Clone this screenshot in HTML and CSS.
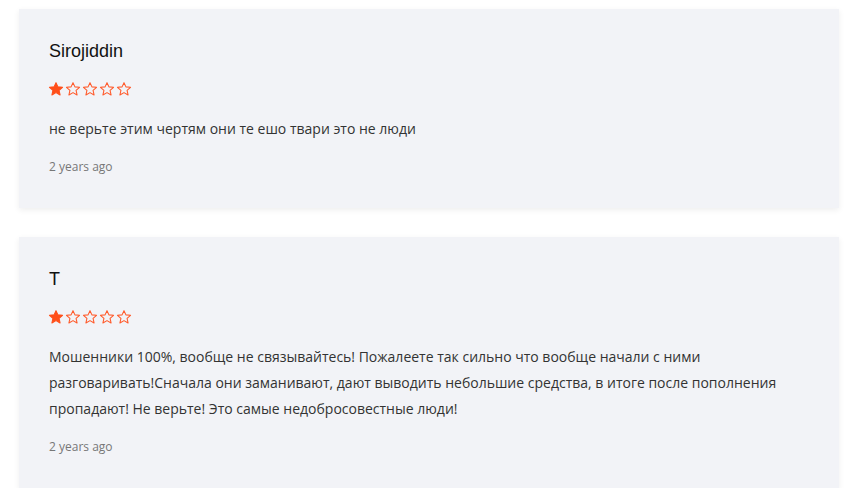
FILE: index.html
```html
<!DOCTYPE html>
<html>
<head>
    <meta charset="UTF-8">
    <meta name="viewport" content="width=device-width, initial-scale=1.0">
    <title>Reviews</title>
    <link rel="stylesheet" href="styles.css">
</head>
<body>
    <div class="reviews">
        <div class="review">
            <h3 class="review-name">Sirojiddin</h3>
            <div class="stars">
                <svg class="star filled" viewBox="0 0 24 24"><path d="M12 2.5l2.9 6.3 6.9.7-5.2 4.6 1.5 6.8L12 17.4l-6.1 3.5 1.5-6.8-5.2-4.6 6.9-.7z"/></svg>
                <svg class="star" viewBox="0 0 24 24"><path d="M12 2.5l2.9 6.3 6.9.7-5.2 4.6 1.5 6.8L12 17.4l-6.1 3.5 1.5-6.8-5.2-4.6 6.9-.7z"/></svg>
                <svg class="star" viewBox="0 0 24 24"><path d="M12 2.5l2.9 6.3 6.9.7-5.2 4.6 1.5 6.8L12 17.4l-6.1 3.5 1.5-6.8-5.2-4.6 6.9-.7z"/></svg>
                <svg class="star" viewBox="0 0 24 24"><path d="M12 2.5l2.9 6.3 6.9.7-5.2 4.6 1.5 6.8L12 17.4l-6.1 3.5 1.5-6.8-5.2-4.6 6.9-.7z"/></svg>
                <svg class="star" viewBox="0 0 24 24"><path d="M12 2.5l2.9 6.3 6.9.7-5.2 4.6 1.5 6.8L12 17.4l-6.1 3.5 1.5-6.8-5.2-4.6 6.9-.7z"/></svg>
            </div>
            <p class="review-text">не верьте этим чертям они те ешо твари это не люди</p>
            <div class="review-date">2 years ago</div>
        </div>
        <div class="review">
            <h3 class="review-name">T</h3>
            <div class="stars">
                <svg class="star filled" viewBox="0 0 24 24"><path d="M12 2.5l2.9 6.3 6.9.7-5.2 4.6 1.5 6.8L12 17.4l-6.1 3.5 1.5-6.8-5.2-4.6 6.9-.7z"/></svg>
                <svg class="star" viewBox="0 0 24 24"><path d="M12 2.5l2.9 6.3 6.9.7-5.2 4.6 1.5 6.8L12 17.4l-6.1 3.5 1.5-6.8-5.2-4.6 6.9-.7z"/></svg>
                <svg class="star" viewBox="0 0 24 24"><path d="M12 2.5l2.9 6.3 6.9.7-5.2 4.6 1.5 6.8L12 17.4l-6.1 3.5 1.5-6.8-5.2-4.6 6.9-.7z"/></svg>
                <svg class="star" viewBox="0 0 24 24"><path d="M12 2.5l2.9 6.3 6.9.7-5.2 4.6 1.5 6.8L12 17.4l-6.1 3.5 1.5-6.8-5.2-4.6 6.9-.7z"/></svg>
                <svg class="star" viewBox="0 0 24 24"><path d="M12 2.5l2.9 6.3 6.9.7-5.2 4.6 1.5 6.8L12 17.4l-6.1 3.5 1.5-6.8-5.2-4.6 6.9-.7z"/></svg>
            </div>
            <p class="review-text">Мошенники 100%, вообще не связывайтесь! Пожалеете так сильно что вообще начали с ними разговаривать!Сначала они заманивают, дают выводить небольшие средства, в итоге после пополнения пропадают! Не верьте! Это самые недобросовестные люди!</p>
            <div class="review-date">2 years ago</div>
        </div>
    </div>
</body>
</html>
```

FILE: styles.css
```css
body {
    margin: 0;
    padding: 0;
    background-color: #fff;
    font-family: 'Open Sans', sans-serif;
}
.reviews {
    display: flex;
    flex-direction: column;
    gap: 29px;
    padding: 9px 10px 0 19px;
}
.review {
    background-color: #f2f3f7;
    padding: 31px 30px 32px 30px;
    box-shadow: 0 2px 6px rgba(0, 0, 0, 0.07);
}
.review-name {
    margin: 0;
    font-family: 'Liberation Sans', Arial, sans-serif;
    font-size: 18px;
    font-weight: normal;
    line-height: 22px;
    color: #111;
}
.stars {
    display: flex;
    gap: 1px;
    height: 16px;
    align-items: center;
    margin: 19px 0 19px -1px;
}
.star {
    width: 16px;
    height: 16px;
    fill: none;
    stroke: #ff5a2b;
    stroke-width: 1.6;
    stroke-linejoin: round;
}
.star.filled {
    fill: #ff4f1a;
    stroke: #ff4f1a;
}
.review-text {
    margin: 0;
    font-size: 14px;
    line-height: 26px;
    color: #333;
}
.review-date {
    margin-top: 16px;
    font-size: 12px;
    line-height: 18px;
    color: #777;
}
```
